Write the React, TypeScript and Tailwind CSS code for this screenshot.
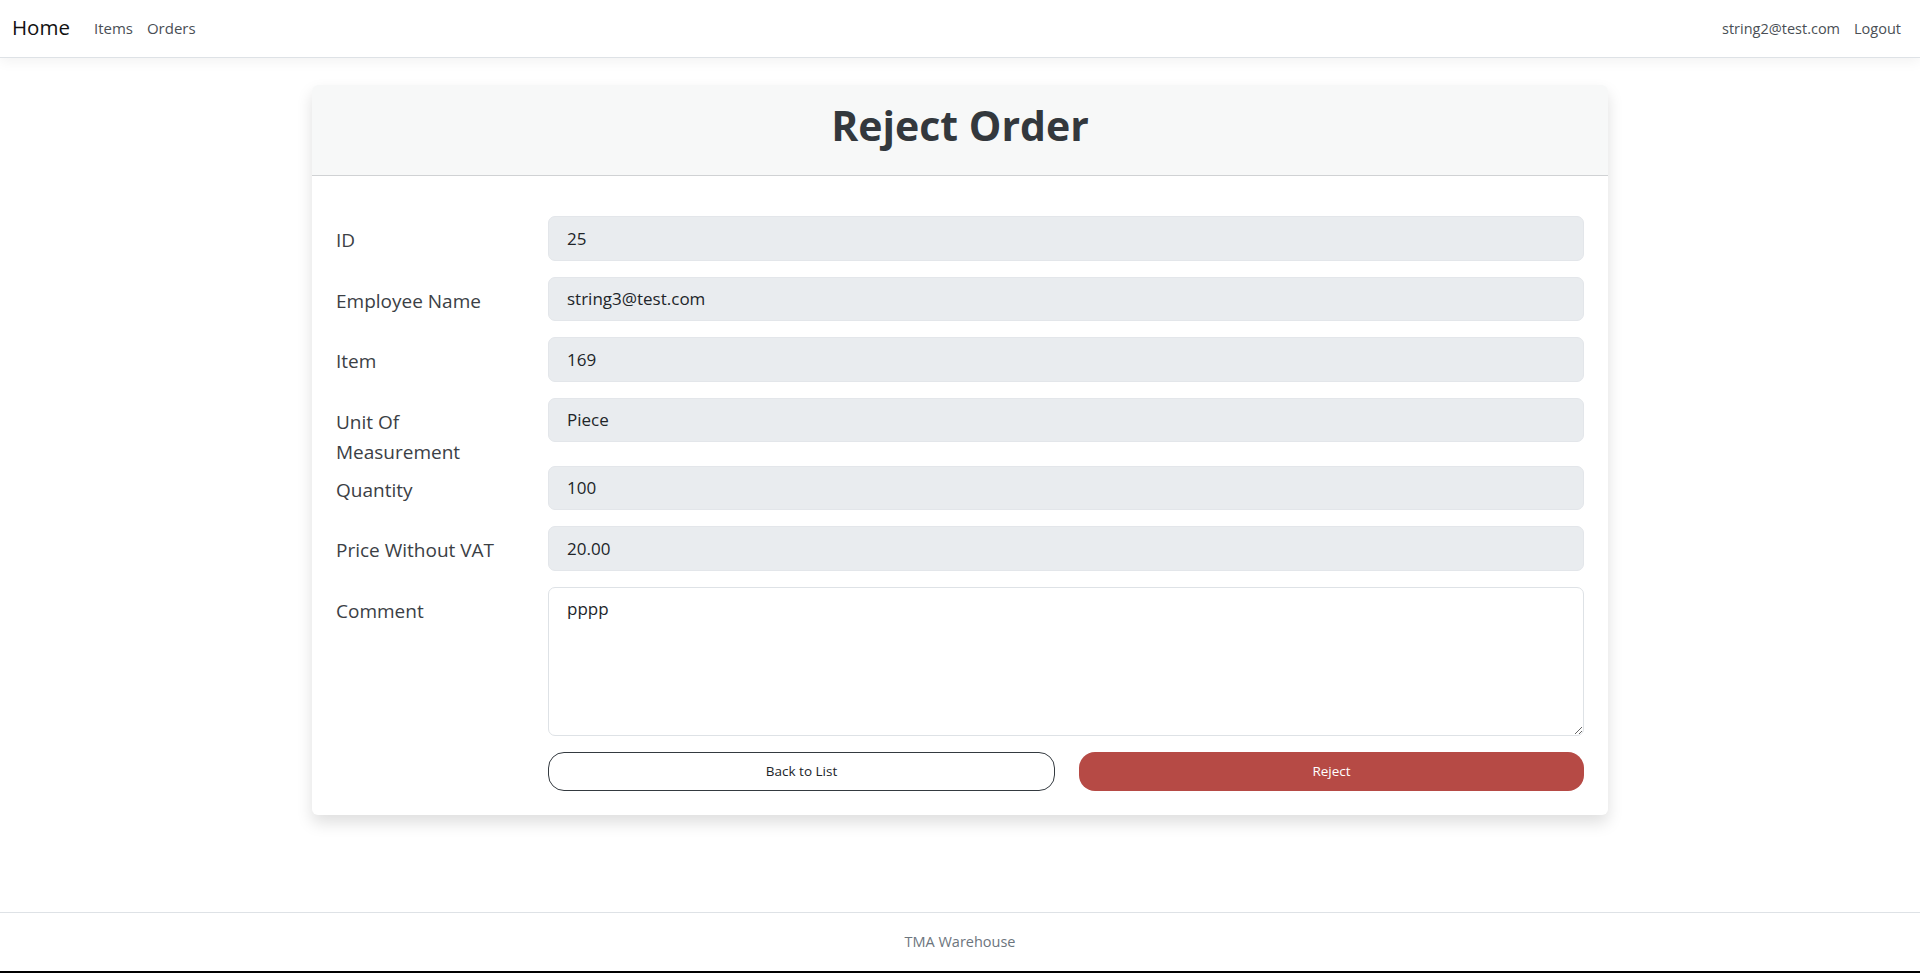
const FIELDS = [
  { label: "ID", value: "25" },
  { label: "Employee Name", value: "string3@test.com" },
  { label: "Item", value: "169" },
  { label: "Unit Of Measurement", value: "Piece", tall: true },
  { label: "Quantity", value: "100" },
  { label: "Price Without VAT", value: "20.00" },
];

function Field({ label, value, tall }: { label: string; value: string; tall?: boolean }) {
  return (
    <div className="flex mb-4">
      <label
        className={
          "w-[212px] shrink-0 pt-[9px] pr-6 text-[19px] leading-[30px] text-[#3b4045] " +
          (tall ? "h-[52px]" : "h-[44.5px]")
        }
      >
        {label}
      </label>
      <input
        readOnly
        value={value}
        className="flex-1 h-[44.5px] px-[18px] rounded-[7px] border border-[#e3e6ea] bg-[#e9ecef] text-[17px] text-[#212529] outline-none"
      />
    </div>
  );
}

export default function App() {
  return (
    <div className="min-h-screen flex flex-col bg-white font-['Open_Sans',sans-serif]">
      {/* nav */}
      <nav className="h-[58px] flex items-center justify-between px-3 border-b border-[#dee2e6] shadow-[0_4px_12px_rgba(0,0,0,0.05)]">
        <div className="flex items-center">
          <a className="text-[20.5px] text-[#111] mr-[24px] pb-[2px]">Home</a>
          <a className="text-[15px] text-[#4a4f55] mr-[14px]">Items</a>
          <a className="text-[15px] text-[#4a4f55]">Orders</a>
        </div>
        <div className="flex items-center gap-[14px] pr-[7px]">
          <a className="text-[14.5px] text-[#4a4f55]">string2@test.com</a>
          <a className="text-[14.5px] text-[#4a4f55]">Logout</a>
        </div>
      </nav>

      <main className="flex-1 pt-[27px]">
        <div className="mx-auto w-[1296px] rounded-md bg-white shadow-[0_8px_16px_rgba(0,0,0,0.13)]">
          <div className="h-[91px] flex items-center justify-center rounded-t-md bg-[#f7f8f8] border-b border-[#d0d2d4]">
            <h1 className="text-[41px] font-bold text-[#33383d] leading-none pb-[9px]">Reject Order</h1>
          </div>
          <div className="px-6 pt-10 pb-6">
            {FIELDS.map((f) => (
              <Field key={f.label} {...f} />
            ))}
            <div className="flex mb-4">
              <label className="w-[212px] shrink-0 pt-[9px] pr-6 text-[19px] leading-[30px] text-[#3b4045]">
                Comment
              </label>
              <textarea
                readOnly
                defaultValue="pppp"
                className="flex-1 h-[149px] px-[18px] py-2 rounded-[7px] border border-[#dee2e6] bg-white text-[17px] text-[#212529] outline-none"
              />
            </div>
            <div className="flex pl-[212px] gap-6">
              <button className="flex-1 h-[39px] rounded-2xl border border-[#343a40] bg-white text-[13.5px] text-[#212529]">
                Back to List
              </button>
              <button className="flex-1 h-[39px] rounded-2xl bg-[#b64a45] text-[13.5px] text-white">
                Reject
              </button>
            </div>
          </div>
        </div>
      </main>

      <footer className="h-[59px] flex items-center justify-center border-t border-[#dee2e6] text-[14.5px] text-[#6c757d]">
        TMA Warehouse
      </footer>
      <div className="h-[2px] bg-black" />
    </div>
  );
}
